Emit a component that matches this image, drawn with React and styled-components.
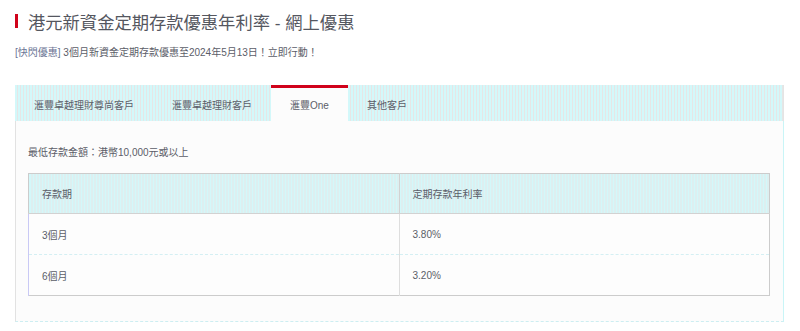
import React, { useState } from "react";
import styled, { createGlobalStyle } from "styled-components";

const GlobalStyle = createGlobalStyle`
  body {
    margin: 0;
    background: #ffffff;
    font-family: "Liberation Sans", "Noto Sans CJK TC", sans-serif;
    color: #5b5d68;
  }
`;

const stripes = `repeating-linear-gradient(90deg, #d3f8fa 0 2px, #e6e6e6 2px 3px)`;

const Page = styled.div`
  padding: 11px 16px 0 15px;
`;

const Title = styled.h1`
  display: flex;
  align-items: center;
  margin: 0;
  height: 20px;
  font-size: 17.3px;
  font-weight: normal;
  color: #55575f;
  &::before {
    content: "";
    width: 3px;
    height: 14px;
    background: #d0021b;
    margin-right: 10px;
  }
`;

const Promo = styled.p`
  margin: 16px 0 0;
  font-size: 10px;
  line-height: 12px;
  color: #5b5d68;
  span {
    color: #6a7494;
  }
`;

const Tabs = styled.div`
  margin-top: 26px;
`;

const TabBar = styled.div`
  display: flex;
  height: 36px;
  background: ${stripes};
  border-right: 1px solid #e4e4e4;
`;

const Tab = styled.button`
  border: none;
  border-top: 3px solid ${(p) => (p.$active ? "#d0021b" : "transparent")};
  box-shadow: ${(p) => (p.$divider ? "inset -1px 0 0 #e2e6e6" : "none")};
  background: ${(p) => (p.$active ? "#fcfcfc" : "transparent")};
  padding: 0 19px;
  height: 36px;
  font-family: inherit;
  font-size: 10px;
  color: #5b5d68;
  cursor: pointer;
`;

const Panel = styled.div`
  background: #fcfcfc;
  border-left: 1px solid #e2e2e2;
  border-right: 1px solid #c9f5f7;
  border-bottom: 1px dashed #cdeef2;
  padding: 25px 13px 25px 12px;
`;

const MinAmount = styled.p`
  margin: 0 0 13px;
  font-size: 10px;
  line-height: 14px;
`;

const RateTable = styled.table`
  width: 100%;
  border-collapse: collapse;
  border: 1px solid #cccccc;
  font-size: 10px;
`;

const HeadCell = styled.th`
  height: 39px;
  padding: 0 0 0 13px;
  text-align: left;
  font-weight: normal;
  background: ${stripes};
  border-bottom: 1px solid #d2d2d2;
  border-left: ${(p) => (p.$split ? "1px solid #d2d2d2" : "none")};
  width: 50%;
`;

const Cell = styled.td`
  height: 40px;
  padding: 0 0 0 13px;
  background: #fdfdfd;
  border-top: 1px dashed #d4eff3;
  border-left: ${(p) => (p.$split ? "1px solid #dedede" : "1px solid #c9c9f5")};
`;

const tabs = ["滙豐卓越理財尊尚客戶", "滙豐卓越理財客戶", "滙豐One", "其他客戶"];

const rates = [
  { term: "3個月", rate: "3.80%" },
  { term: "6個月", rate: "3.20%" },
];

export default function App() {
  const [active, setActive] = useState(2);
  return (
    <>
      <GlobalStyle />
      <Page>
        <Title>港元新資金定期存款優惠年利率 - 網上優惠</Title>
        <Promo>
          <span>[快閃優惠]</span> 3個月新資金定期存款優惠至2024年5月13日！立即行動！
        </Promo>
        <Tabs>
          <TabBar>
            {tabs.map((t, i) => (
              <Tab key={t} $active={i === active} $divider={i === tabs.length - 1} onClick={() => setActive(i)}>
                {t}
              </Tab>
            ))}
          </TabBar>
          <Panel>
            <MinAmount>最低存款金額：港幣10,000元或以上</MinAmount>
            <RateTable>
              <thead>
                <tr>
                  <HeadCell>存款期</HeadCell>
                  <HeadCell $split>定期存款年利率</HeadCell>
                </tr>
              </thead>
              <tbody>
                {rates.map((r) => (
                  <tr key={r.term}>
                    <Cell>{r.term}</Cell>
                    <Cell $split>{r.rate}</Cell>
                  </tr>
                ))}
              </tbody>
            </RateTable>
          </Panel>
        </Tabs>
      </Page>
    </>
  );
}
